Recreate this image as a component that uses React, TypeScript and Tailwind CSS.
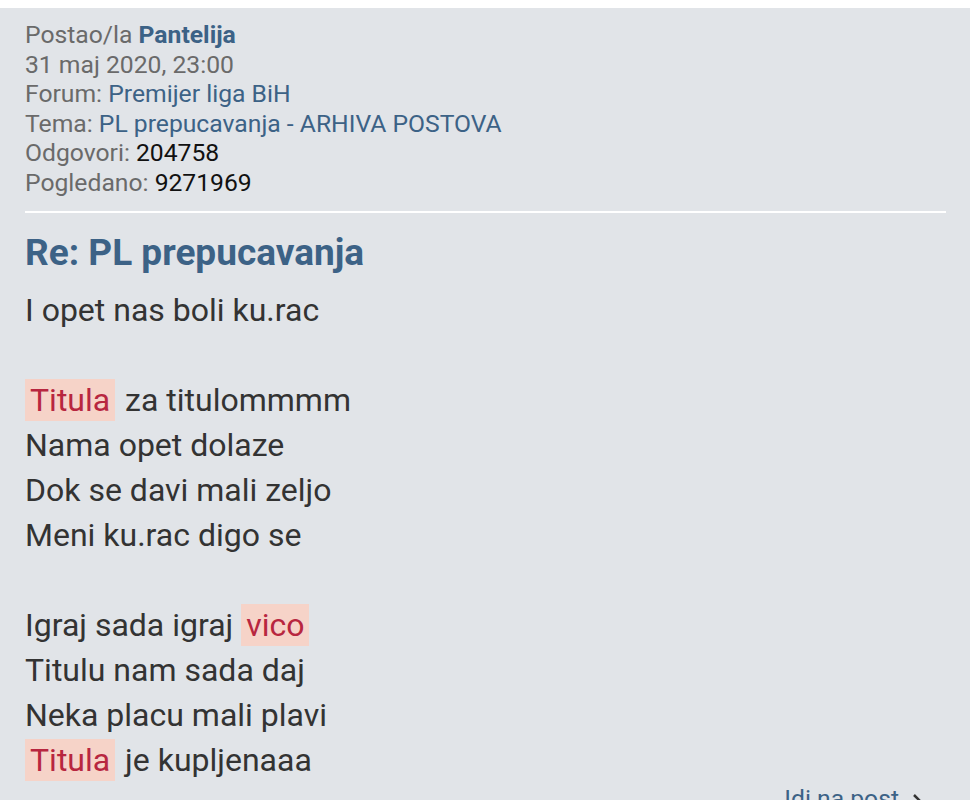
import React from 'react';

const Hl: React.FC<{ children: React.ReactNode }> = ({ children }) => (
  <span className="bg-[#f6d3c8] text-[#b8263f] px-[5px] py-[2px] mr-[2px]">{children}</span>
);

const Meta: React.FC<{ label: string; children: React.ReactNode; link?: boolean }> = ({ label, children, link }) => (
  <div>
    <span className="text-[#6a6a6a]">{label} </span>
    <span className={link ? 'text-[#3c6286]' : 'text-[#111]'}>{children}</span>
  </div>
);

export default function App() {
  const lines: React.ReactNode[] = [
    'I opet nas boli ku.rac',
    '',
    <><Hl>Titula</Hl> za titulommmm</>,
    'Nama opet dolaze',
    'Dok se davi mali zeljo',
    'Meni ku.rac digo se',
    '',
    <>Igraj sada igraj <Hl>vico</Hl></>,
    'Titulu nam sada daj',
    'Neka placu mali plavi',
    <><Hl>Titula</Hl> je kupljenaaa</>,
  ];
  return (
    <div className="h-[800px] overflow-hidden bg-white pt-[8px] font-['Roboto',sans-serif]">
      <div className="h-full bg-[#e1e4e8] px-[25px] pt-[12px]">
        <div className="text-[24.7px] leading-[29.6px]">
          <div>
            <span className="text-[#6a6a6a]">Postao/la </span>
            <span className="font-bold text-[#3c6286]">Pantelija</span>
          </div>
          <div className="text-[#6a6a6a]">31 maj 2020, 23:00</div>
          <Meta label="Forum:" link>Premijer liga BiH</Meta>
          <Meta label="Tema:" link>PL prepucavanja - ARHIVA POSTOVA</Meta>
          <Meta label="Odgovori:">204758</Meta>
          <Meta label="Pogledano:">9271969</Meta>
        </div>
        <div className="mt-[13px] h-[2px] w-[921px] bg-white" />
        <h2 className="mt-[20px] text-[37px] font-bold leading-[40px] text-[#3c6286]">Re: PL prepucavanja</h2>
        <div className="mt-[15px] text-[32px] leading-[45px] text-[#333]">
          {lines.map((l, i) => (
            <div key={i} className="h-[45px]">{l}</div>
          ))}
        </div>
        <div className="mt-[1px] flex justify-end pr-[20px] text-[24.7px] leading-[30px] text-[#3c6286]">
          <span>Idi na post</span>
          <svg className="ml-[12px] mt-[8px]" width="14" height="20" viewBox="0 0 14 20" fill="none" stroke="#333" strokeWidth="2.5">
            <path d="M3 3l7 7-7 7" />
          </svg>
        </div>
      </div>
    </div>
  );
}
